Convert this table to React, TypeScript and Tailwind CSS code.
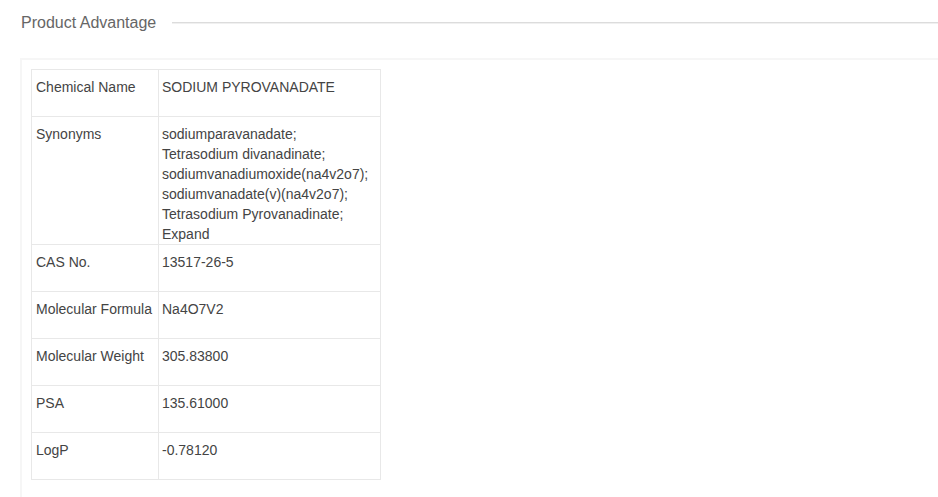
const rows: { label: string; value: string[] }[] = [
  { label: "Chemical Name", value: ["SODIUM PYROVANADATE"] },
  {
    label: "Synonyms",
    value: [
      "sodiumparavanadate;",
      "Tetrasodium divanadinate;",
      "sodiumvanadiumoxide(na4v2o7);",
      "sodiumvanadate(v)(na4v2o7);",
      "Tetrasodium Pyrovanadinate;",
      "Expand",
    ],
  },
  { label: "CAS No.", value: ["13517-26-5"] },
  { label: "Molecular Formula", value: ["Na4O7V2"] },
  { label: "Molecular Weight", value: ["305.83800"] },
  { label: "PSA", value: ["135.61000"] },
  { label: "LogP", value: ["-0.78120"] },
];

export default function App() {
  return (
    <div className="w-[938px] h-[497px] overflow-hidden bg-white font-['Liberation_Sans',Arial,sans-serif]">
      <div className="flex items-center pl-[21px] pt-[12px] h-[22px] box-content">
        <h2 className="text-[16px] leading-[22px] text-[#666] whitespace-nowrap">Product Advantage</h2>
        <div className="flex-1 ml-[16px] h-px bg-[#dcdcdc] border-b border-[#f0f0f0] box-content"></div>
      </div>

      <div className="mt-[24px] ml-[20px] border-t-2 border-l-2 border-[#f6f6f6] pl-[9px] pt-[9px] h-[460px]">
        <table className="border-collapse w-[350px] text-[14px] leading-[20px] text-[#333]">
          <tbody>
            {rows.map((row) => (
              <tr key={row.label}>
                <td className="w-[127px] h-[47px] border border-[#e8e8e8] align-top pt-[7px] pl-[4px] pr-0 whitespace-nowrap text-[#444]">
                  {row.label}
                </td>
                <td className="h-[47px] border border-[#e8e8e8] align-top pt-[7px] pl-[3px] pr-[2px] text-[#444]">
                  {row.value.map((v, i) => (
                    <div key={i}>{v}</div>
                  ))}
                </td>
              </tr>
            ))}
          </tbody>
        </table>
      </div>
    </div>
  );
}
